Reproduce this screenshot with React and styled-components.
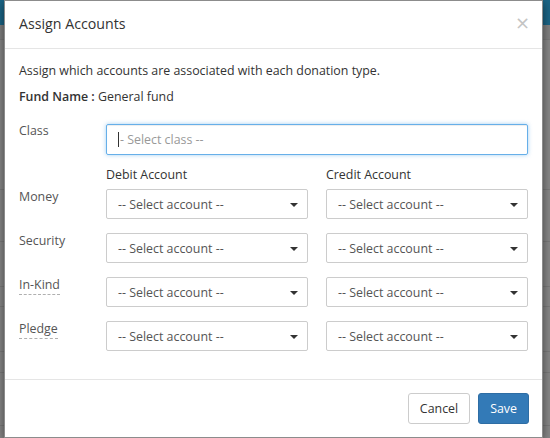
import React from "react";
import styled, { createGlobalStyle } from "styled-components";

const Global = createGlobalStyle`
  html, body { margin: 0; padding: 0; }
  body { font-family: "Open Sans", "Noto Sans", sans-serif; background: #858585; }
  * { box-sizing: border-box; }
`;

const Page = styled.div`
  position: relative;
  width: 550px;
  height: 438px;
  overflow: hidden;
  background: #868686;
`;

const NavBar = styled.div`
  height: 25px;
  background: #1b6586;
`;

const PageRows = styled.div`
  display: flex;
  flex-direction: column;
`;

const PageRow = styled.div`
  height: ${(p) => p.$h}px;
  border-bottom: 1px solid #7a7a7a;
  background: ${(p) => (p.$dark ? "#808080" : "#878787")};
`;

const Modal = styled.div`
  position: absolute;
  left: 4px;
  top: 0;
  width: 539px;
  height: 438px;
  background: #fff;
  border: 1px solid #8c8c8c;
  box-shadow: 0 3px 9px rgba(0, 0, 0, 0.5);
  display: flex;
  flex-direction: column;
  color: #333;
`;

const Header = styled.div`
  height: 48px;
  flex: none;
  display: flex;
  align-items: center;
  justify-content: space-between;
  padding: 0 14px;
  border-bottom: 1px solid #e5e5e5;
`;

const Title = styled.h4`
  margin: 0;
  font-size: 14.2px;
  font-weight: 400;
  color: #333;
  line-height: 18px;
  padding-bottom: 2px;
`;

const Close = styled.button`
  border: 0;
  background: none;
  padding: 0 0 4px;
  margin-right: -2px;
  color: #c4c4c4;
  font-size: 18px;
  line-height: 18px;
  font-family: "DejaVu Sans", sans-serif;
  cursor: pointer;
`;

const Body = styled.div`
  flex: 1;
  padding: 13px 14px 0;
  font-size: 12.4px;
`;

const Intro = styled.p`
  margin: 0 0 8px;
  line-height: 18px;
`;

const Fund = styled.p`
  margin: 0 0 18px;
  line-height: 18px;
`;

const Strong = styled.strong`
  font-weight: 600;
`;

const Form = styled.div`
  display: flex;
  flex-direction: column;
`;

const FormRow = styled.div`
  display: grid;
  grid-template-columns: 87px 1fr;
  align-items: start;
  margin-top: ${(p) => p.$mt || 0}px;
`;

const Fields = styled.div`
  display: grid;
  grid-template-columns: 1fr 1fr;
  column-gap: 18px;
`;

const Label = styled.span`
  justify-self: start;
  color: #555;
  line-height: 18px;
  margin-top: ${(p) => (p.$up ? -2 : -1)}px;
  border-bottom: 1px ${(p) => (p.$hint ? "dashed #b0b0b0" : "solid transparent")};
`;

const ClassInput = styled.div`
  height: 31px;
  border: 1px solid #66afe9;
  border-radius: 2px;
  box-shadow: inset 0 1px 1px rgba(0, 0, 0, 0.075), 0 0 4px rgba(102, 175, 233, 0.6);
  display: flex;
  align-items: center;
  padding: 0 11px;
  color: #999;
`;

const Cursor = styled.span`
  display: inline-block;
  width: 1px;
  height: 15px;
  background: #333;
  margin-right: 1px;
`;

const ColHead = styled.span`
  line-height: 18px;
  color: #333;
`;

const Select = styled.div`
  height: 30px;
  border: 1px solid #ccc;
  border-radius: 2px;
  display: flex;
  align-items: center;
  justify-content: space-between;
  padding: 0 9px 0 11px;
  color: #555;
`;

const Caret = styled.span`
  width: 0;
  height: 0;
  border-left: 4px solid transparent;
  border-right: 4px solid transparent;
  border-top: 4px solid #333;
  margin-top: 1px;
`;

const Footer = styled.div`
  flex: none;
  height: 58px;
  border-top: 1px solid #e5e5e5;
  display: flex;
  justify-content: flex-end;
  align-items: flex-start;
  gap: 8px;
  padding: 13px 13px 0;
`;

const Button = styled.button`
  height: 31px;
  padding: 0 11px;
  border-radius: 3px;
  font-family: inherit;
  font-size: 12.4px;
  border: 1px solid ${(p) => (p.$primary ? "#2e6da4" : "#ccc")};
  background: ${(p) => (p.$primary ? "#337ab7" : "#fff")};
  color: ${(p) => (p.$primary ? "#fff" : "#333")};
`;

const rows = [
  { name: "Money" },
  { name: "Security" },
  { name: "In-Kind", hint: true },
  { name: "Pledge", hint: true },
];

const bgRows = [15, 150, 52, 45, 20, 45, 21, 53, 40];

export default function App() {
  return (
    <Page>
      <Global />
      <NavBar />
      <PageRows>
        {bgRows.map((h, i) => (
          <PageRow key={i} $h={h} $dark={i === 0} />
        ))}
      </PageRows>
      <Modal>
        <Header>
          <Title>Assign Accounts</Title>
          <Close aria-label="Close">×</Close>
        </Header>
        <Body>
          <Intro>Assign which accounts are associated with each donation type.</Intro>
          <Fund>
            <Strong>Fund Name :</Strong> General fund
          </Fund>
          <Form>
            <FormRow>
              <Label $up>Class</Label>
              <ClassInput>
                <Cursor />- Select class --
              </ClassInput>
            </FormRow>
            <FormRow $mt={11}>
              <span />
              <Fields>
                <ColHead>Debit Account</ColHead>
                <ColHead>Credit Account</ColHead>
              </Fields>
            </FormRow>
            {rows.map((r, i) => (
              <FormRow key={r.name} $mt={i === 0 ? 5 : 14}>
                <Label $hint={r.hint}>{r.name}</Label>
                <Fields>
                  <Select>
                    -- Select account --
                    <Caret />
                  </Select>
                  <Select>
                    -- Select account --
                    <Caret />
                  </Select>
                </Fields>
              </FormRow>
            ))}
          </Form>
        </Body>
        <Footer>
          <Button>Cancel</Button>
          <Button $primary>Save</Button>
        </Footer>
      </Modal>
    </Page>
  );
}
